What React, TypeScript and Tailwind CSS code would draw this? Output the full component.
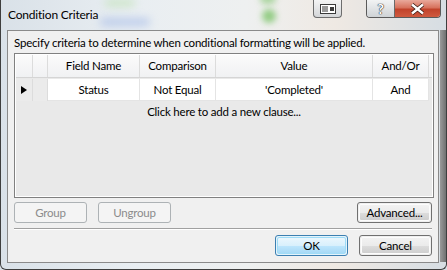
import React from 'react';

const FONT = { fontFamily: 'Lato, "Noto Sans", Arial, sans-serif' };

const COLS = [
  { label: 'Field Name', w: 'w-[92px]', value: 'Status' },
  { label: 'Comparison', w: 'w-[76px]', value: 'Not Equal' },
  { label: 'Value', w: 'w-[157px]', value: "'Completed'" },
  { label: 'And/Or', w: 'w-[56px]', value: 'And' },
];

function WinButton({ label, width, disabled, primary }: { label: string; width: string; disabled?: boolean; primary?: boolean }) {
  if (disabled) {
    return (
      <div className={`${width} h-[21px] rounded-[3px] border border-[#adb2b5] bg-[#f4f4f4] flex items-center justify-center text-[11.5px] text-[#8b8b8b]`}>
        {label}
      </div>
    );
  }
  if (primary) {
    return (
      <div className={`${width} h-[21px] rounded-[3px] border border-[#3c7fb1] p-px bg-[#e3f3fb]`}>
        <div className="h-full rounded-[2px] border border-[#9fdcf7] bg-[linear-gradient(#eaf6fd_0%,#d9f0fc_50%,#bee6fd_51%,#a7d9f5_100%)] flex items-center justify-center text-[11.5px] text-black">
          {label}
        </div>
      </div>
    );
  }
  return (
    <div className={`${width} h-[21px] rounded-[3px] border border-[#707070] p-px`}>
      <div className="h-full rounded-[2px] border border-[#fcfcfc] bg-[linear-gradient(#f2f2f2_0%,#ebebeb_50%,#dddddd_51%,#cfcfcf_100%)] flex items-center justify-center text-[11.5px] text-black">
        {label}
      </div>
    </div>
  );
}

export default function App() {
  return (
    <div className="w-[447px] h-[270px] relative overflow-hidden bg-[#dfe6ec] tracking-[-0.2px]" style={FONT}>
      {/* glass backdrop */}
      <div className="absolute inset-0 bg-[linear-gradient(90deg,#d9e1e8_0%,#e9eef2_30%,#eef0f0_55%,#efe9e3_75%,#d6dde3_100%)]" />
      <div className="absolute left-[100px] top-[18px] w-[50px] h-[8px] rounded-full bg-[#9fb6e6] blur-[4px] opacity-60" />
      <div className="absolute left-[105px] top-[0px] w-[30px] h-[6px] rounded-full bg-[#b8e0a8] blur-[4px] opacity-70" />
      <div className="absolute left-[262px] top-[9px] w-[14px] h-[14px] rounded-full bg-[#7cc46a] blur-[3px] opacity-80" />
      <div className="absolute left-[260px] top-[-6px] w-[16px] h-[10px] rounded-full bg-[#7cc46a] blur-[3px] opacity-60" />
      <div className="absolute left-[440px] top-[30px] w-[7px] h-[232px] bg-[linear-gradient(90deg,#9a9a9a,#6a6a6a)]" />
      <div className="absolute inset-0 rounded-b-[6px] border-x border-b border-[#3e3e3e] pointer-events-none" />

      {/* caption buttons */}
      <div className="absolute left-[313px] top-0 w-[29px] h-[18px] rounded-b-[4px] border border-t-0 border-[#6d6d6d] bg-[linear-gradient(#f4f4f4,#d4d6d8)] flex items-center justify-center">
        <svg width="16" height="10" viewBox="0 0 16 10">
          <rect x="0.5" y="0.5" width="15" height="9" fill="#fff" stroke="#3a3a3a" />
          <rect x="2" y="2" width="6" height="6" fill="#9a9a9a" />
          <rect x="10" y="3" width="4" height="4" fill="#3a3a3a" />
        </svg>
      </div>
      <div className="absolute left-[366px] top-0 w-[75px] h-[18px] flex rounded-b-[4px] border border-t-0 border-[#5a5a5a] overflow-hidden">
        <div className="w-[28px] h-full border-r border-[#6a6a6a] bg-[linear-gradient(#f2f3f4,#cfd3d6)] flex items-center justify-center text-[14px] font-bold text-white leading-none [text-shadow:0_0_1px_#333,0_0_1px_#333,0_0_1px_#333]">
          ?
        </div>
        <div className="flex-1 h-full bg-[linear-gradient(#e9a99b_0%,#d7725d_45%,#c1432b_55%,#d05a3f_100%)] flex items-center justify-center">
          <svg width="15" height="12" viewBox="0 0 15 12">
            <path d="M2 1.5 L7.5 6 L13 1.5 M2 10.5 L7.5 6 L13 10.5" stroke="#3a1a12" strokeWidth="4" fill="none" />
            <path d="M2 1.5 L7.5 6 L13 1.5 M2 10.5 L7.5 6 L13 10.5" stroke="#fff" strokeWidth="2.4" fill="none" />
          </svg>
        </div>
      </div>

      <div className="relative flex flex-col h-full">
        {/* title */}
        <div className="h-[30px] pl-[8px] pt-[6px] text-[12px] text-black">Condition Criteria</div>

        {/* client area */}
        <div className="ml-[7px] w-[432px] h-[233px] border border-[#8a8a8a] bg-[#f0f0f0] flex flex-col px-[6px]">
          <div className="h-[22px] pt-[6px] text-[11.5px] leading-none text-black whitespace-nowrap">
            Specify criteria to determine when conditional formatting will be applied.
          </div>

          {/* grid */}
          <div className="w-[420px] h-[145px] border border-[#808080] p-px bg-white">
            <div className="h-full bg-[#e9e9e9] flex flex-col">
              <div className="h-[23px] flex bg-[linear-gradient(#fbfbfb,#f0f1f3)] border-b border-[#d5d5d5] text-[11.5px] text-black">
                <div className="w-[17px] border-r border-[#dcdcdc]" />
                <div className="w-[15px] border-r border-[#dcdcdc]" />
                {COLS.map(c => (
                  <div key={c.label} className={`${c.w} border-r border-[#dcdcdc] flex items-center justify-center`}>{c.label}</div>
                ))}
              </div>
              <div className="h-[22px] flex mt-px text-[11.5px] text-black">
                <div className="w-[17px] bg-[#ebebeb] border-r border-[#dcdcdc] flex items-center pl-[4px]">
                  <svg width="8" height="8" viewBox="0 0 8 8"><path d="M1 0 L7 4 L1 8 Z" fill="#000" /></svg>
                </div>
                <div className="w-[15px] bg-[#ebebeb] border-r border-[#dcdcdc]" />
                {COLS.map(c => (
                  <div key={c.label} className={`${c.w} bg-white border-r border-b border-[#e4e4e4] flex items-center justify-center`}>{c.value}</div>
                ))}
              </div>
              <div className="h-[21px] flex items-center justify-center text-[11.5px] text-black">Click here to add a new clause...</div>
            </div>
          </div>

          {/* group buttons */}
          <div className="mt-[4px] flex items-center">
            <WinButton label="Group" width="w-[73px]" disabled />
            <div className="ml-[11px]"><WinButton label="Ungroup" width="w-[73px]" disabled /></div>
            <div className="ml-auto"><WinButton label="Advanced..." width="w-[75px]" /></div>
          </div>

          <div className="mt-[5px] h-px bg-[#a0a0a0] border-b border-white box-content" />

          <div className="mt-[5px] flex items-center justify-end gap-[11px]">
            <WinButton label="OK" width="w-[73px]" primary />
            <WinButton label="Cancel" width="w-[73px]" />
          </div>
        </div>
      </div>
    </div>
  );
}
